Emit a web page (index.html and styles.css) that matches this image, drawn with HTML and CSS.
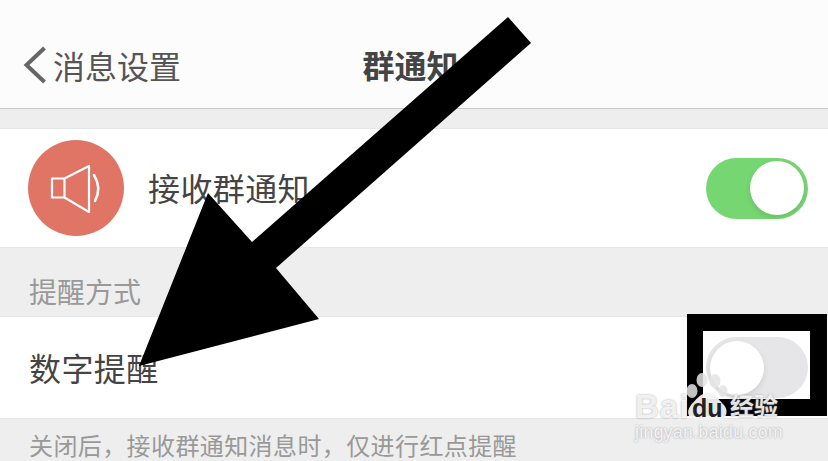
FILE: index.html
```html
<!DOCTYPE html>
<html lang="zh-CN">
  <head>
    <meta charset="UTF-8" />
    <title>群通知</title>
    <link rel="stylesheet" href="styles.css">
  </head>
  <body>
    <div class="nav">
      <div class="back">
        <svg class="chevron" width="24" height="38" viewBox="0 0 24 38">
          <path d="M21.5 2 L3.500 19 L21.500 36" fill="none" stroke="#666" stroke-width="4"/>
        </svg>
        <span>消息设置</span>
      </div>
      <div class="title">群通知</div>
    </div>
    <div class="gap"></div>
    <div class="row row-first">
      <div class="icon">
        <svg width="96" height="96" viewBox="0 0 96 96">
          <path d="M24 38.500 H36.500 L61 26 V72 L36.500 57.500 H24 Z M36.500 38.500 V57.500" fill="none" stroke="#fff" stroke-width="2.200" stroke-linejoin="round"/>
          <path d="M66 35 Q74 48 67 61" fill="none" stroke="#fff" stroke-width="2.500" stroke-linecap="round"/>
        </svg>
      </div>
      <div class="label">接收群通知</div>
      <div class="switch on"><div class="knob"></div></div>
    </div>
    <div class="section">提醒方式</div>
    <div class="row row-second">
      <div class="label">数字提醒</div>
      <div class="switch"><div class="knob"></div></div>
    </div>
    <div class="foot">关闭后，接收群通知消息时，仅进行红点提醒</div>

    <!-- stuff drawn on top of the screenshot -->
    <div class="frame"></div>
    <svg class="arrow" width="828" height="461" viewBox="0 0 828 461">
      <polygon points="508,17 531,43 276,268 319,319 139,366 208,193 252,242" fill="#000"/>
    </svg>
    <div class="mark">
      <div class="mark-top">
        <span class="bai">Bai</span>
        <span class="paw">
          <svg width="43" height="47" viewBox="0 0 43 47">
            <g fill="#e4e4e4" fill-opacity="0.85">
              <ellipse cx="7" cy="18" rx="5.500" ry="7"/>
              <ellipse cx="17" cy="7" rx="5.500" ry="7"/>
              <ellipse cx="30" cy="8" rx="5.500" ry="7"/>
              <ellipse cx="38" cy="18" rx="4.500" ry="6"/>
              <path d="M23 20 C30 20 33 26 38 31 C45 38 41 47 32 47 C26 47 20 46 13 47 C4 47 0 40 6 32 C11 27 15 20 23 20 Z" fill="#f2f2f2" fill-opacity="0.95"/>
            </g>
          </svg>
          <span class="du">du</span>
        </span>
        <span class="jy">经验</span>
      </div>
      <div class="mark-url">jingyan.baidu.com</div>
    </div>
  </body>
</html>
```

FILE: styles.css
```css
html,
body {
  margin: 0;
  padding: 0;
}

body {
  width: 828px;
  height: 461px;
  overflow: hidden;
  position: relative;
  background: #eeeeee;
  font-family: "Noto Sans CJK SC", "Liberation Sans", sans-serif;
  color: #444;
}

.nav {
  height: 108px;
  background: #fcfcfc;
  border-bottom: 1px solid #c8c8c8;
  display: flex;
  align-items: center;
  justify-content: center;
  position: relative;
}

.back {
  position: absolute;
  left: 23px;
  top: 46px;
  display: flex;
  align-items: center;
  gap: 6px;
  font-size: 32px;
  line-height: 38px;
  color: #555;
}

.title {
  font-size: 32px;
  font-weight: bold;
  padding: 20px 7px 0 0;
  color: #444;
}

.gap {
  height: 19px;
}

.row {
  background: #fff;
  display: flex;
  align-items: center;
  box-sizing: border-box;
  padding: 0 20px 0 28px;
  border-top: 1px solid #e6e6e6;
  border-bottom: 1px solid #e6e6e6;
  font-size: 32px;
}

.row-first {
  height: 120px;
}

.row-second {
  height: 103px;
}

.row .label {
  letter-spacing: 0.4px;
  padding-bottom: 2px;
}

.row-second .label {
  padding-left: 1px;
}

.icon {
  width: 96px;
  height: 96px;
  border-radius: 50%;
  background: #e07565;
  margin-right: 24px;
}

.label {
  flex: 1;
}

.switch {
  width: 102px;
  height: 61px;
  border-radius: 31px;
  background: #e6e6e8;
  display: flex;
  align-items: center;
  padding: 0 4px;
  box-sizing: border-box;
}

.switch.on {
  background: #76d672;
  justify-content: flex-end;
}

.knob {
  width: 54px;
  height: 54px;
  border-radius: 50%;
  background: #fff;
  box-shadow: 0 3px 6px rgba(0, 0, 0, 0.1);
}

.section {
  height: 68px;
  box-sizing: border-box;
  padding: 23px 0 0 29px;
  font-size: 28px;
  line-height: 40px;
  color: #999;
}

.foot {
  padding: 12px 0 0 29px;
  font-size: 24px;
  letter-spacing: 0.4px;
  line-height: 28px;
  color: #999;
}

.frame {
  position: absolute;
  left: 687px;
  top: 314px;
  width: 107px;
  height: 68px;
  border-style: solid;
  border-color: #000;
  border-width: 17px 17px 17px 16px;
}

.arrow {
  position: absolute;
  left: 0;
  top: 0;
}

.mark {
  position: absolute;
  left: 635px;
  top: 373px;
  color: rgba(255, 255, 255, 0.85);
  font-family: "Liberation Sans", sans-serif;
  text-shadow: 0 0 2px rgba(130, 130, 130, 0.8);
}

.mark-top {
  display: flex;
  align-items: flex-end;
  height: 47px;
}

.bai {
  font-size: 33px;
  line-height: 30px;
  font-weight: bold;
  letter-spacing: 1px;
  width: 50px;
  margin-bottom: -2px;
}

.paw {
  position: relative;
  width: 43px;
  height: 47px;
}

.du {
  position: absolute;
  left: 7px;
  top: 23px;
  font-size: 25px;
  line-height: 24px;
  font-weight: bold;
  color: #222;
  text-shadow: none;
}

.jy {
  font-family: "Noto Sans CJK SC", sans-serif;
  font-size: 24px;
  line-height: 30px;
  font-weight: bold;
  margin-left: 2px;
  white-space: nowrap;
}

.mark-url {
  font-size: 17.500px;
  line-height: 24px;
  letter-spacing: 0.4px;
  white-space: nowrap;
}
```
